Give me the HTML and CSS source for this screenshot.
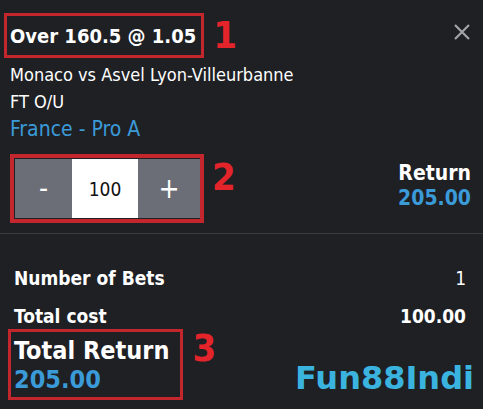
FILE: index.html
```html
<!DOCTYPE html>
<html lang="en">
<head>
    <meta charset="UTF-8">
    <meta name="viewport" content="width=device-width, initial-scale=1.0">
    <title>Bet Slip</title>
    <link rel="stylesheet" href="styles.css">
</head>
<body>
    <div class="slip">
        <div class="bet">
            <div class="title-row">
                <div class="mark-box title-box">
                    <span class="title">Over 160.5 @ 1.05</span>
                </div>
                <span class="step-num num-1">1</span>
                <button class="close-btn" aria-label="Remove">
                    <svg width="18" height="18" viewBox="0 0 18 18">
                        <path d="M2 2 L16 16 M16 2 L2 16" stroke="#a3a4a8" stroke-width="2.2" fill="none"/>
                    </svg>
                </button>
            </div>
            <div class="match">Monaco vs Asvel Lyon-Villeurbanne</div>
            <div class="market">FT O/U</div>
            <div class="league">France - Pro A</div>
            <div class="stake-row">
                <div class="mark-box stake-box">
                    <div class="stepper">
                        <button class="step-btn">-</button>
                        <input type="text" class="stake-input" value="100">
                        <button class="step-btn">+</button>
                    </div>
                </div>
                <span class="step-num num-2">2</span>
                <div class="return">
                    <div class="return-label">Return</div>
                    <div class="return-value">205.00</div>
                </div>
            </div>
        </div>
        <div class="summary">
            <div class="sum-row">
                <span class="sum-label">Number of Bets</span>
                <span class="sum-count">1</span>
            </div>
            <div class="sum-row">
                <span class="sum-label">Total cost</span>
                <span class="sum-value">100.00</span>
            </div>
            <div class="total-row">
                <div class="mark-box total-box">
                    <div class="total-label">Total Return</div>
                    <div class="total-value">205.00</div>
                </div>
                <span class="step-num num-3">3</span>
                <span class="watermark">Fun88Indi</span>
            </div>
        </div>
    </div>
</body>
</html>
```

FILE: styles.css
```css
body {
    margin: 0;
    background: #1e2024;
    color: #ffffff;
    font-family: "DejaVu Sans Condensed", "DejaVu Sans", sans-serif;
}
.slip {
    width: 483px;
    height: 409px;
    overflow: hidden;
}
.bet {
    padding: 13px 12px 0 10px;
    border-bottom: 1px solid #3a3c41;
    height: 234px;
    box-sizing: border-box;
}
.mark-box {
    border: 3px solid #c4262e;
}
.title-row {
    display: flex;
    align-items: flex-start;
    margin-left: -6px;
}
.title-box {
    padding: 8px 5px 7px 3px;
}
.title {
    font-weight: bold;
    font-size: 20px;
}
.step-num {
    color: #e3242b;
    font-family: "Liberation Sans Narrow", "DejaVu Sans Condensed", sans-serif;
    font-weight: bold;
    font-size: 38px;
    line-height: 1;
}
.num-1 {
    margin: 3px 0 0 9px;
}
.close-btn {
    margin-left: auto;
    margin-top: 10px;
    background: none;
    border: none;
    padding: 0;
    cursor: pointer;
}
.match, .market {
    font-size: 18px;
}
.match {
    margin-top: 6px;
}
.market {
    margin-top: 6px;
}
.league {
    margin-top: 5px;
    font-size: 21px;
    color: #3b9ad8;
}
.stake-row {
    display: flex;
    align-items: flex-start;
    margin-top: 13px;
}
.stake-box {
    border-width: 4px;
    padding: 1px 0 1px 1px;
}
.stepper {
    display: flex;
    height: 59px;
}
.step-btn {
    width: 57px;
    border: none;
    background: #6b6e77;
    color: #ffffff;
    font-family: inherit;
    font-size: 28px;
    cursor: pointer;
}
.step-btn:last-child {
    width: 62px;
}
.stake-input {
    width: 66px;
    border: none;
    text-align: center;
    font-family: inherit;
    font-size: 19px;
    color: #111111;
    padding: 0;
}
.num-2 {
    margin: 4px 0 0 8px;
}
.return {
    margin-left: auto;
    text-align: right;
    font-weight: bold;
    font-size: 21px;
    line-height: 1.2;
    margin-top: 7px;
}
.return-value {
    color: #3b9ad8;
}
.summary {
    padding: 33px 17px 0 14px;
}
.sum-row {
    display: flex;
    justify-content: space-between;
    font-size: 19px;
    font-weight: bold;
    margin-bottom: 16px;
}
.sum-count {
    font-weight: normal;
}
.total-row {
    display: flex;
    align-items: flex-start;
    margin-left: -6px;
    margin-top: -14px;
}
.total-box {
    padding: 4px 11px 3px 3px;
}
.total-label {
    font-size: 25px;
    font-weight: bold;
}
.total-value {
    font-size: 25px;
    font-weight: bold;
    color: #3b9ad8;
}
.num-3 {
    margin: 0 0 0 9px;
}
.watermark {
    margin-left: auto;
    margin-top: 30px;
    margin-right: -8px;
    font-family: "DejaVu Sans", sans-serif;
    font-weight: bold;
    font-size: 32px;
    color: #3bb3df;
}
```
